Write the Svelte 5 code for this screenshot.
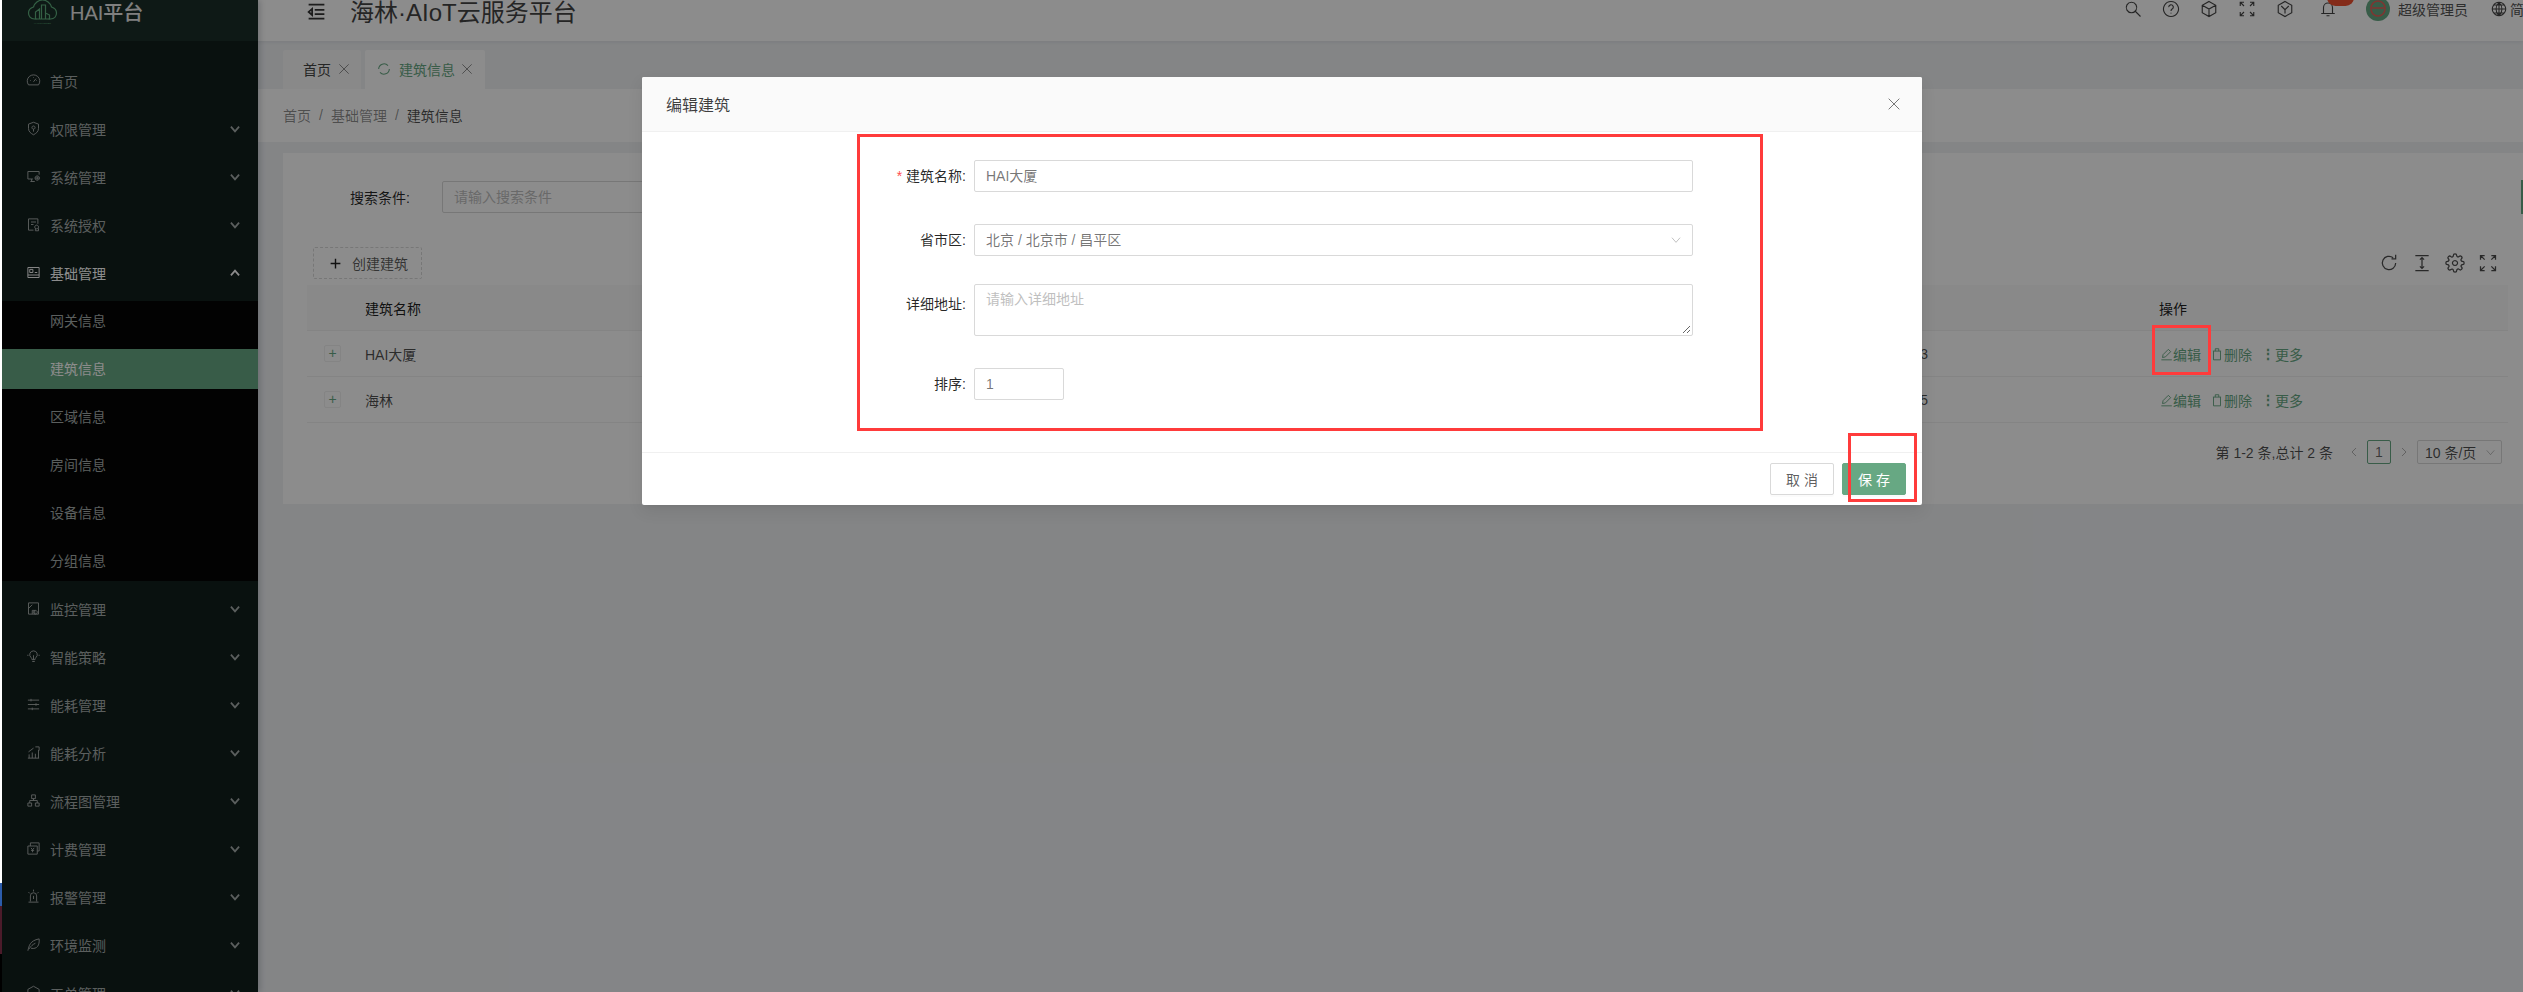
<script lang="ts">
	// Stroke paths on a 24 box
	const icons: Record<string, string> = {
		gauge: 'M4 19a10 10 0 1 1 16 0ZM12 14l4-5M7 12h1M16 12h1M12 7v1',
		shield: 'M12 2l8 3v7c0 5-4 8-8 10-4-2-8-5-8-10V5ZM12 8a2.5 2.5 0 1 0 .01 0M12 13v4',
		screen: 'M11 16H3V4h18v5M7 20h7M9 16v4M18 11a3.5 3.5 0 1 0 .01 0M18 12v5M15 14.5h6',
		license: 'M12 21H4V3h15v8M8 8h8M8 12h4M17 13a3 3 0 1 0 .01 0M15 18v4h5v-4',
		board: 'M3 4h18v16H3ZM3 16h18M6 7h5v5H6ZM14 12h4',
		monitor: 'M4 3h16v18H4ZM4 12l6-6M10 21v-6h4v6M15 15a3 3 0 1 0 .01 0',
		bulb: 'M12 3a6 6 0 0 0-4 10.500c1 1 1.500 2 1.500 3.500h5c0-1.500.5-2.500 1.500-3.500A6 6 0 0 0 12 3ZM10 20h4M12 10v7M2 10h2M20 10h2',
		sliders: 'M3 5h18M3 12h18M3 19h18M8 3v4M16 10v4M10 17v4',
		chart: 'M3 21h18M5 21v-6M10 21v-9M15 21v-7M20 21V8M4 11l8-6M15 3h6v6',
		flow: 'M9 3h6v6H9ZM3 16h6v5H3ZM15 16h6v5h-6ZM12 9v3M6 16v-4h12v4',
		bill: 'M3 8h15v13H3ZM7 8V3h14v13h-3M8 11l2.500 3 2.500-3M10.500 14v4M8 15h5',
		alarm: 'M7 20V11a5 5 0 0 1 10 0v9M4 21h16M12 1v3M4 5l2 2M20 5l-2 2M12 11v5',
		leaf: 'M3 22C5 14 6 6 21 3c1 10-3 17-13 15M5 19c3-5 6-7 10-9',
		hex: 'M12 2l9 5v10l-9 5-9-5V7Z',
		search: 'M10 3a7 7 0 1 0 .01 0M15 15l7 7',
		help: 'M12 2a10 10 0 1 0 .01 0M9 9.500a3 3 0 1 1 4.500 2.500c-1 .7-1.500 1.300-1.500 2.500M12 17v1',
		cube: 'M12 2l9 5v10l-9 5-9-5V7ZM3 7l9 5 9-5M12 12v10',
		full: 'M3 8V3h5M3 3l5 5M21 8V3h-5M21 3l-5 5M3 16v5h5M3 21l5-5M21 16v5h-5M21 21l-5-5',
		yhex: 'M12 2l9 5v10l-9 5-9-5V7ZM7 8l5 5 5-5M12 13v5',
		bell: 'M6 18V10a6 6 0 0 1 12 0v8M3 18h18M10 21h4',
		globe: 'M12 2a10 10 0 1 0 .01 0M2 12h20M4 6h16M4 18h16M12 2c-6 6-6 14 0 20M12 2c6 6 6 14 0 20M12 2v20',
		reload: 'M20 12a8 8 0 1 1-3-6.300M20 2v5h-5',
		density: 'M4 3h16M4 21h16M12 6v12M9.500 8L12 5.500 14.500 8M9.500 16l2.500 2.500 2.500-2.500',
		gear: 'M19.400 15a1.650 1.650 0 0 0 .33 1.820l.06.06a2 2 0 0 1-2.830 2.830l-.06-.06a1.650 1.650 0 0 0-1.820-.33 1.650 1.650 0 0 0-1 1.510V21a2 2 0 0 1-4 0v-.09A1.650 1.650 0 0 0 9 19.400a1.650 1.650 0 0 0-1.820.33l-.06.06a2 2 0 0 1-2.830-2.830l.06-.06a1.650 1.650 0 0 0 .33-1.820 1.650 1.650 0 0 0-1.510-1H3a2 2 0 0 1 0-4h.09A1.650 1.650 0 0 0 4.600 9a1.650 1.650 0 0 0-.33-1.820l-.06-.06a2 2 0 0 1 2.830-2.830l.06.06a1.650 1.650 0 0 0 1.820.33H9a1.650 1.650 0 0 0 1-1.510V3a2 2 0 0 1 4 0v.09a1.650 1.650 0 0 0 1 1.510 1.650 1.650 0 0 0 1.820-.33l.06-.06a2 2 0 0 1 2.830 2.830l-.06.06a1.650 1.650 0 0 0-.33 1.820V9a1.650 1.650 0 0 0 1.510 1H21a2 2 0 0 1 0 4h-.09a1.650 1.650 0 0 0-1.510 1ZM12 9a3 3 0 1 0 .01 0',
		pen: 'M4 22h18M6 18l1-5L16 4l4 4-9 9Z',
		trash: 'M5 7h14M9 7V3h6v4M6 7v15h12V7',
		plus: 'M12 3v18M3 12h18',
		close: 'M4 4l16 16M20 4L4 20',
		down: 'M5 8l7 8 7-8',
		up: 'M5 16l7-8 7 8',
		left: 'M16 4l-8 8 8 8',
		right: 'M8 4l8 8-8 8',
		sync: 'M4 12a8 8 0 0 1 14-5M20 12a8 8 0 0 1-14 5',
		fold: 'M3 4h18M10 10h11M10 15h11M3 20h18M7 9l-4 3.500L7 16Z'
	};

	const topMenus = [
		{ icon: 'gauge', label: '首页', arrow: false },
		{ icon: 'shield', label: '权限管理', arrow: true },
		{ icon: 'screen', label: '系统管理', arrow: true },
		{ icon: 'license', label: '系统授权', arrow: true }
	];
	const subMenus = ['网关信息', '建筑信息', '区域信息', '房间信息', '设备信息', '分组信息'];
	const bottomMenus = [
		{ icon: 'monitor', label: '监控管理' },
		{ icon: 'bulb', label: '智能策略' },
		{ icon: 'sliders', label: '能耗管理' },
		{ icon: 'chart', label: '能耗分析' },
		{ icon: 'flow', label: '流程图管理' },
		{ icon: 'bill', label: '计费管理' },
		{ icon: 'alarm', label: '报警管理' },
		{ icon: 'leaf', label: '环境监测' },
		{ icon: 'hex', label: '工单管理' }
	];
	const headerTools = ['search', 'help', 'cube', 'full', 'yhex'];
	const tableTools = ['reload', 'density', 'gear', 'full'];
	const rows = [
		{ name: 'HAI大厦', time: '2023-10-12 16:26:13' },
		{ name: '海林', time: '2023-09-20 11:08:45' }
	];
</script>

{#snippet icon(name: string, cls = '')}
	<svg class="ico {cls}" viewBox="0 0 24 24"><path d={icons[name]} /></svg>
{/snippet}

<div class="shell">
	<div class="strip">
		<div class="strip-white"></div>
		<div class="strip-blue"></div>
		<div class="strip-red"></div>
		<div class="strip-black"></div>
	</div>

	<aside class="sidebar">
		<div class="logo">
			<svg class="logo-mark" viewBox="0 0 30 24">
				<path d="M9 19H7C3 19 1 16 1 13c0-3 2-5 5-6 1-4 5-7 9-7s8 3 9 7c3 1 5 3 5 6 0 3-2 6-6 6h-2" />
				<path d="M8 19v-7l4-3v10M14 19V5h4v14M18 19v-6l4 2v4H8" />
				<text x="15" y="23.500">HAILIN TOWER</text>
			</svg>
			<span class="logo-text">HAI平台</span>
		</div>
		<nav class="menu">
			{#each topMenus as m}
				<div class="menu-item">
					{@render icon(m.icon, 'menu-ico')}
					<span class="menu-label">{m.label}</span>
					{#if m.arrow}{@render icon('down', 'chev')}{/if}
				</div>
			{/each}
			<div class="menu-item open">
				{@render icon('board', 'menu-ico')}
				<span class="menu-label">基础管理</span>
				{@render icon('up', 'chev')}
			</div>
			<div class="submenu">
				{#each subMenus as s, i}
					<div class="sub-item" class:active={i === 1}>{s}</div>
				{/each}
			</div>
			{#each bottomMenus as m}
				<div class="menu-item">
					{@render icon(m.icon, 'menu-ico')}
					<span class="menu-label">{m.label}</span>
					{@render icon('down', 'chev')}
				</div>
			{/each}
		</nav>
	</aside>

	<main class="main">
		<header class="topbar">
			{@render icon('fold', 'fold')}
			<span class="site-title">海林·AIoT云服务平台</span>
			<div class="top-right">
				{#each headerTools as t}
					{@render icon(t, 'top-ico')}
				{/each}
				<div class="bell">
					{@render icon('bell', 'top-ico')}
					<span class="badge"></span>
				</div>
				<span class="avatar">
					<svg viewBox="0 0 24 24"><circle cx="12" cy="12" r="12" class="av-bg" /><path class="av-fg" d="M12 4a7 7 0 0 0-7 8c0 4 3 7 7 7s7-3 7-7a7 7 0 0 0-7-8ZM6 11h12" /></svg>
				</span>
				<span class="user">超级管理员</span>
				{@render icon('globe', 'globe')}
				<span class="lang">简体中文</span>
			</div>
		</header>

		<div class="tabs">
			<div class="tab">首页 {@render icon('close', 'tab-x')}</div>
			<div class="tab current">{@render icon('sync', 'tab-sync')}<span>建筑信息</span> {@render icon('close', 'tab-x')}</div>
		</div>

		<div class="crumbs">
			<span>首页</span><i>/</i><span>基础管理</span><i>/</i><span class="here">建筑信息</span>
		</div>

		<section class="card">
			<div class="search">
				<span class="search-label">搜索条件:</span>
				<div class="search-input">请输入搜索条件</div>
			</div>
			<div class="toolbar">
				<div class="create">{@render icon('plus', 'plus')}创建建筑</div>
				<div class="tools">
					{#each tableTools as t}
						{@render icon(t, 'tool-ico')}
					{/each}
				</div>
			</div>
			<div class="table">
				<div class="tr th">
					<span class="td-expand"></span>
					<span class="td-name">建筑名称</span>
					<span class="td-time"></span>
					<span class="td-op">操作</span>
				</div>
				{#each rows as r}
					<div class="tr">
						<span class="td-expand"><span class="expand">+</span></span>
						<span class="td-name">{r.name}</span>
						<span class="td-time">{r.time}</span>
						<span class="td-op">
							<span class="act">{@render icon('pen', 'act-ico')}编辑</span>
							<span class="act">{@render icon('trash', 'act-ico')}删除</span>
							<span class="act more"><b class="dots">⋮</b>更多</span>
						</span>
					</div>
				{/each}
			</div>
			<div class="pager">
				<span class="total">第 1-2 条,总计 2 条</span>
				{@render icon('left', 'page-arrow')}
				<span class="page-no">1</span>
				{@render icon('right', 'page-arrow')}
				<span class="page-size">10 条/页 {@render icon('down', 'size-caret')}</span>
			</div>
		</section>
	</main>

	<div class="mask"></div>

	<div class="modal">
		<div class="modal-head">
			<span>编辑建筑</span>
			{@render icon('close', 'modal-x')}
		</div>
		<div class="modal-body">
			<div class="form">
				<label class="f-label"><em>*</em>建筑名称:</label>
				<div class="f-input">HAI大厦</div>
				<label class="f-label">省市区:</label>
				<div class="f-input cascader">北京 / 北京市 / 昌平区{@render icon('down', 'casc-caret')}</div>
				<label class="f-label tall">详细地址:</label>
				<div class="f-input area">请输入详细地址
					<svg class="resizer" viewBox="0 0 10 10"><path d="M9 2L2 9M9 6L6 9" /></svg>
				</div>
				<label class="f-label">排序:</label>
				<div class="f-input short">1</div>
			</div>
		</div>
		<div class="modal-foot">
			<button class="btn">取 消</button>
			<button class="btn primary">保 存</button>
		</div>
	</div>

	<div class="mark mark-form"></div>
	<div class="mark mark-edit"></div>
	<div class="mark mark-save"></div>
	<div class="scroll-thumb"></div>
</div>

<style>
	:global(body) {
		margin: 0;
		overflow: hidden;
		background: #f0f2f5;
	}

	.shell {
		position: relative;
		display: flex;
		width: 2523px;
		height: 992px;
		overflow: hidden;
		font-family: "Liberation Sans", "Noto Sans CJK SC", sans-serif;
		font-size: 14px;
		color: rgba(0, 0, 0, 0.85);
	}

	.ico {
		flex: none;
		width: 16px;
		height: 16px;
		fill: none;
		stroke: currentColor;
		stroke-width: 1.600;
	}

	.strip {
		position: relative;
		z-index: 5;
		flex: none;
		display: flex;
		flex-direction: column;
		width: 2px;
	}
	.strip-white { height: 883px; background: #fff; }
	.strip-blue { height: 23px; background: #2c5cab; }
	.strip-red { height: 48px; background: #4b1b2a; }
	.strip-black { flex: 1; background: #000; }

	.sidebar {
		flex: none;
		width: 256px;
		background: #121f1d;
		box-shadow: 2px 0 6px rgba(0, 21, 41, 0.2);
		z-index: 1;
	}
	.logo {
		display: flex;
		align-items: center;
		height: 41px;
		padding: 0 0 18px 25px;
		box-sizing: border-box;
		background: #1b2f28;
	}
	.logo-mark {
		width: 31px;
		height: 24px;
		fill: none;
		stroke: #5fb07f;
		stroke-width: 1.200;
	}
	.logo-mark text {
		font-size: 2.400px;
		text-anchor: middle;
		fill: #5fb07f;
		stroke: none;
	}
	.logo-text {
		margin-left: 12px;
		font-size: 20px;
		font-weight: 500;
		color: #e8e8e8;
	}
	.menu { padding-top: 16px; }
	.menu-item {
		display: flex;
		align-items: center;
		height: 48px;
		padding: 0 16px 1px 24px;
		box-sizing: border-box;
		color: #a6adab;
	}
	.menu-item.open { color: #fff; }
	.menu-ico {
		width: 15px;
		height: 15px;
		stroke-width: 1.500;
	}
	.menu-label { margin-left: 9px; flex: 1; }
	.chev {
		width: 14px;
		height: 14px;
		stroke-width: 3;
	}
	.submenu { background: #040505; }
	.sub-item {
		height: 40px;
		margin-bottom: 8px;
		padding-left: 48px;
		line-height: 40px;
		color: #a6adab;
	}
	.sub-item:first-child { margin-top: 4px; }
	.sub-item:last-child { margin-bottom: 4px; }
	.sub-item.active { background: #67a883; color: #fff; }

	.main {
		flex: 1;
		min-width: 0;
		display: flex;
		flex-direction: column;
		background: #f0f2f5;
	}

	.topbar {
		flex: none;
		display: flex;
		align-items: center;
		height: 41px;
		box-sizing: border-box;
		padding: 0 0 18px 48px;
		background: #fff;
		box-shadow: 0 1px 4px rgba(0, 21, 41, 0.08);
	}
	.fold { width: 21px; height: 21px; stroke-width: 2; color: #333; }
	.site-title {
		margin-left: 23px;
		margin-top: -3px;
		font-size: 24px;
		color: #444;
		white-space: nowrap;
	}
	.top-right {
		flex: none;
		display: flex;
		align-items: center;
		margin-left: auto;
		margin-top: -5px;
		margin-right: -43px;
		color: #444;
	}
	.top-ico {
		width: 18px;
		height: 18px;
		margin-right: 20px;
		stroke-width: 1.500;
	}
	.bell { position: relative; display: flex; margin-left: 5px; margin-right: 8px; }
	.badge {
		position: absolute;
		left: 8px;
		top: -11px;
		width: 27px;
		height: 17px;
		border-radius: 9px;
		background: #f04f2e;
	}
	.avatar { width: 24px; height: 24px; margin-left: 1px; }
	.avatar svg { display: block; width: 24px; height: 24px; }
	.av-bg { fill: #67a883; }
	.av-fg { fill: none; stroke: #e8605a; stroke-width: 1.500; }
	.user { margin-left: 8px; color: #555; white-space: nowrap; }
	.globe { margin-left: 23px; }
	.lang { margin-left: 3px; white-space: nowrap; color: #555; }

	.tabs {
		flex: none;
		display: flex;
		align-items: flex-end;
		gap: 4px;
		height: 48px;
		padding-left: 25px;
		box-sizing: border-box;
	}
	.tab {
		display: flex;
		align-items: center;
		gap: 6px;
		height: 39px;
		box-sizing: border-box;
		padding: 0 10px 2px 20px;
		background: #fafafa;
		border-radius: 2px 2px 0 0;
		color: #444;
	}
	.tab.current { background: #fff; color: #67a883; padding-left: 11px; padding-right: 11px; }
	.tab.current span { margin: 0 -1px 0 1px; }
	.tab-x { width: 14px; height: 14px; color: #777; stroke-width: 1.400; }
	.tab-sync { width: 16px; height: 16px; }

	.crumbs {
		flex: none;
		display: flex;
		align-items: center;
		height: 53px;
		box-sizing: border-box;
		padding-left: 25px;
		padding-bottom: 1px;
		background: #fff;
		color: rgba(0, 0, 0, 0.45);
	}
	.crumbs i { margin: 0 8px; font-style: normal; }
	.crumbs .here { color: rgba(0, 0, 0, 0.7); }

	.card {
		flex: none;
		margin: 11px 0 0 25px;
		padding: 28px 15px 40px 24px;
		background: #fff;
	}
	.search {
		display: flex;
		align-items: center;
		padding-left: 43px;
	}
	.search-label { width: 92px; flex: none; }
	.search-input {
		width: 400px;
		height: 32px;
		box-sizing: border-box;
		padding-left: 11px;
		line-height: 30px;
		border: 1px solid #d9d9d9;
		border-radius: 2px;
		color: #bfbfbf;
	}
	.toolbar {
		display: flex;
		align-items: center;
		justify-content: space-between;
		margin-top: 34px;
		padding: 0 10px 0 6px;
	}
	.create {
		display: flex;
		align-items: center;
		gap: 9px;
		width: 109px;
		height: 32px;
		box-sizing: border-box;
		padding-left: 15px;
		border: 1px dashed #d9d9d9;
		border-radius: 2px;
		color: rgba(0, 0, 0, 0.65);
	}
	.plus { width: 13px; height: 13px; stroke-width: 2.600; color: #222; margin-right: 1px; }
	.tools { display: flex; gap: 13px; color: rgba(0, 0, 0, 0.7); }
	.tool-ico { width: 20px; height: 20px; stroke-width: 1.500; }

	.table { margin-top: 6px; }
	.tr {
		display: flex;
		align-items: center;
		height: 46px;
		border-bottom: 1px solid #f0f0f0;
		box-sizing: border-box;
		color: rgba(0, 0, 0, 0.7);
	}
	.th { background: #fafafa; color: rgba(0, 0, 0, 0.9); }
	.td-expand { flex: none; width: 58px; padding-left: 17px; box-sizing: border-box; }
	.td-name { flex: 1; }
	.td-time { flex: none; width: 300px; text-align: right; margin-right: 231px; }
	.td-op { flex: none; width: 349px; display: flex; gap: 9px; }
	.expand {
		display: block;
		width: 17px;
		height: 17px;
		box-sizing: border-box;
		border: 1px solid #f0f0f0;
		border-radius: 2px;
		line-height: 14px;
		text-align: center;
		color: #67a883;
	}
	.act { display: flex; align-items: center; color: #67a883; }
	.act-ico { width: 14px; height: 14px; stroke-width: 1.600; }
	.dots { font-weight: 700; width: 14px; text-align: center; }

	.pager {
		display: flex;
		align-items: center;
		justify-content: flex-end;
		height: 24px;
		margin-top: 17px;
		padding-right: 6px;
	}
	.total { margin-right: 8px; color: rgba(0, 0, 0, 0.7); }
	.page-arrow { width: 12px; height: 12px; stroke-width: 1.500; color: rgba(0, 0, 0, 0.4); margin: 0 7px; }
	.page-no {
		width: 24px;
		height: 24px;
		box-sizing: border-box;
		border: 1px solid #67a883;
		border-radius: 2px;
		text-align: center;
		line-height: 22px;
		color: rgba(0, 0, 0, 0.6);
	}
	.page-size {
		display: flex;
		align-items: center;
		justify-content: space-between;
		width: 85px;
		height: 24px;
		box-sizing: border-box;
		padding: 0 4px 0 7px;
		border: 1px solid #d9d9d9;
		border-radius: 2px;
		color: rgba(0, 0, 0, 0.7);
		white-space: nowrap;
	}
	.size-caret { width: 13px; height: 13px; color: rgba(0, 0, 0, 0.3); stroke-width: 1.500; }

	.mask {
		position: absolute;
		inset: 0 0 0 2px;
		z-index: 2;
		background: rgba(0, 0, 0, 0.45);
	}

	.modal {
		position: absolute;
		left: 642px;
		top: 77px;
		z-index: 3;
		width: 1280px;
		height: 428px;
		display: flex;
		flex-direction: column;
		background: #fff;
		border-radius: 2px;
		box-shadow: 0 3px 6px -4px rgba(0, 0, 0, 0.12), 0 6px 16px rgba(0, 0, 0, 0.08);
	}
	.modal-head {
		flex: none;
		display: flex;
		align-items: center;
		justify-content: space-between;
		height: 55px;
		box-sizing: border-box;
		padding: 0 20px 0 24px;
		background: #fafafa;
		border-bottom: 1px solid #f0f0f0;
		border-radius: 2px 2px 0 0;
		font-size: 16px;
		color: rgba(0, 0, 0, 0.75);
	}
	.modal-x { width: 16px; height: 16px; color: #777; stroke-width: 1.500; }
	.modal-body { flex: 1; padding-top: 28px; }
	.form {
		display: grid;
		grid-template-columns: 116px 719px;
		column-gap: 8px;
		row-gap: 32px;
		margin-left: 208px;
		align-items: start;
	}
	.f-label {
		line-height: 32px;
		text-align: right;
		color: rgba(0, 0, 0, 0.85);
	}
	.f-label.tall { margin-top: -4px; padding-top: 4px; }
	.f-label em { font-style: normal; color: #ff4d4f; margin-right: 4px; }
	.f-input {
		position: relative;
		height: 32px;
		box-sizing: border-box;
		padding-left: 11px;
		line-height: 30px;
		border: 1px solid #d9d9d9;
		border-radius: 2px;
		color: rgba(0, 0, 0, 0.55);
	}
	.cascader { display: flex; justify-content: space-between; align-items: center; padding-right: 9px; }
	.casc-caret { width: 14px; height: 14px; color: rgba(0, 0, 0, 0.3); stroke-width: 1.400; }
	.area {
		height: 52px;
		margin-top: -4px;
		line-height: 28px;
		color: #bfbfbf;
	}
	.resizer {
		position: absolute;
		right: 1px;
		bottom: 1px;
		width: 10px;
		height: 10px;
		fill: none;
		stroke: #666;
		stroke-width: 1;
	}
	.short { width: 90px; }
	.modal-foot {
		flex: none;
		display: flex;
		align-items: center;
		justify-content: flex-end;
		gap: 8px;
		height: 53px;
		box-sizing: border-box;
		padding: 0 16px 0 0;
		border-top: 1px solid #f0f0f0;
	}
	.btn {
		width: 64px;
		height: 32px;
		padding: 0;
		border: 1px solid #d9d9d9;
		border-radius: 2px;
		background: #fff;
		font: inherit;
		color: rgba(0, 0, 0, 0.65);
		box-shadow: 0 2px 0 rgba(0, 0, 0, 0.015);
	}
	.btn.primary { background: #67a883; border-color: #67a883; color: #fff; }

	.mark {
		position: absolute;
		z-index: 4;
		box-sizing: border-box;
		border: 3px solid #ff3b3b;
		pointer-events: none;
	}
	.mark-form { left: 857px; top: 134px; width: 906px; height: 297px; }
	.mark-edit { left: 2152px; top: 325px; width: 59px; height: 50px; }
	.mark-save { left: 1848px; top: 433px; width: 69px; height: 69px; }

	.scroll-thumb {
		position: absolute;
		right: 0;
		top: 180px;
		z-index: 1;
		width: 2px;
		height: 34px;
		background: #67a883;
	}
</style>
